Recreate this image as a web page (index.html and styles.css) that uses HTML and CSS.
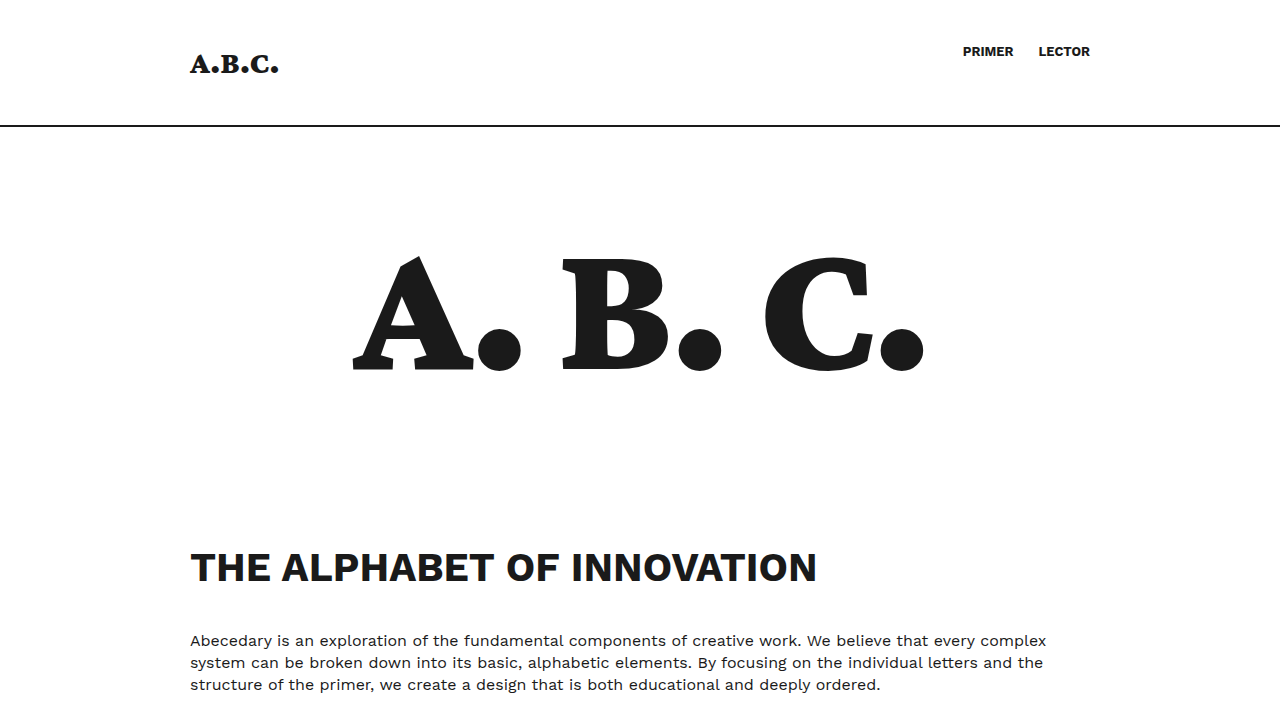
FILE: index.html
```html
<!DOCTYPE html>
<html lang="en">
<head>
    <meta charset="UTF-8">
    <meta name="viewport" content="width=device-width, initial-scale=1.0">
    <title>A.B.C.</title>
    <link rel="stylesheet" href="styles.css">
</head>
<body>
    <header class="site-header">
        <div class="container header-inner">
            <a class="logo" href="#">A.B.C.</a>
            <nav>
                <ul class="nav-list">
                    <li><a href="#primer">Primer</a></li>
                    <li><a href="#lector">Lector</a></li>
                </ul>
            </nav>
        </div>
    </header>
    <main>
        <div class="hero">
            <h1 class="hero-title">A. B. C.</h1>
        </div>
        <section class="container intro" id="primer">
            <h2>The Alphabet of Innovation</h2>
            <p>Abecedary is an exploration of the fundamental components of creative work. We believe that every complex system can be broken down into its basic, alphabetic elements. By focusing on the individual letters and the structure of the primer, we create a design that is both educational and deeply ordered.</p>
        </section>
    </main>
</body>
</html>
```

FILE: styles.css
```css
* {
    box-sizing: border-box;
    margin: 0;
    padding: 0;
}
body {
    font-family: "Work Sans", Inter, sans-serif;
    font-size: 16px;
    line-height: 22px;
    color: #1a1a1a;
    background-color: #fff;
}
a {
    color: inherit;
    text-decoration: none;
}
.container {
    max-width: 940px;
    margin: 0 auto;
    padding: 0 20px;
}
.site-header {
    padding: 40px 0;
    border-bottom: 2px solid #1a1a1a;
}
.header-inner {
    display: flex;
    justify-content: space-between;
    align-items: flex-start;
}
.logo {
    font-family: "Crimson Pro", "Noto Serif", serif;
    font-size: 32px;
    font-weight: 900;
    line-height: 45px;
}
.nav-list {
    display: flex;
    gap: 25px;
    list-style: none;
}
.nav-list a {
    font-size: 13px;
    font-weight: 700;
    text-transform: uppercase;
}
.hero {
    padding: 100px 20px;
    margin-bottom: 60px;
    text-align: center;
}
.hero-title {
    font-family: "Crimson Pro", "Noto Serif", serif;
    font-size: 192px;
    font-weight: 900;
    line-height: 153px;
    letter-spacing: -5px;
}
.intro h2 {
    font-size: 40px;
    font-weight: 700;
    line-height: 56px;
    margin-bottom: 34px;
    text-transform: uppercase;
}
```
